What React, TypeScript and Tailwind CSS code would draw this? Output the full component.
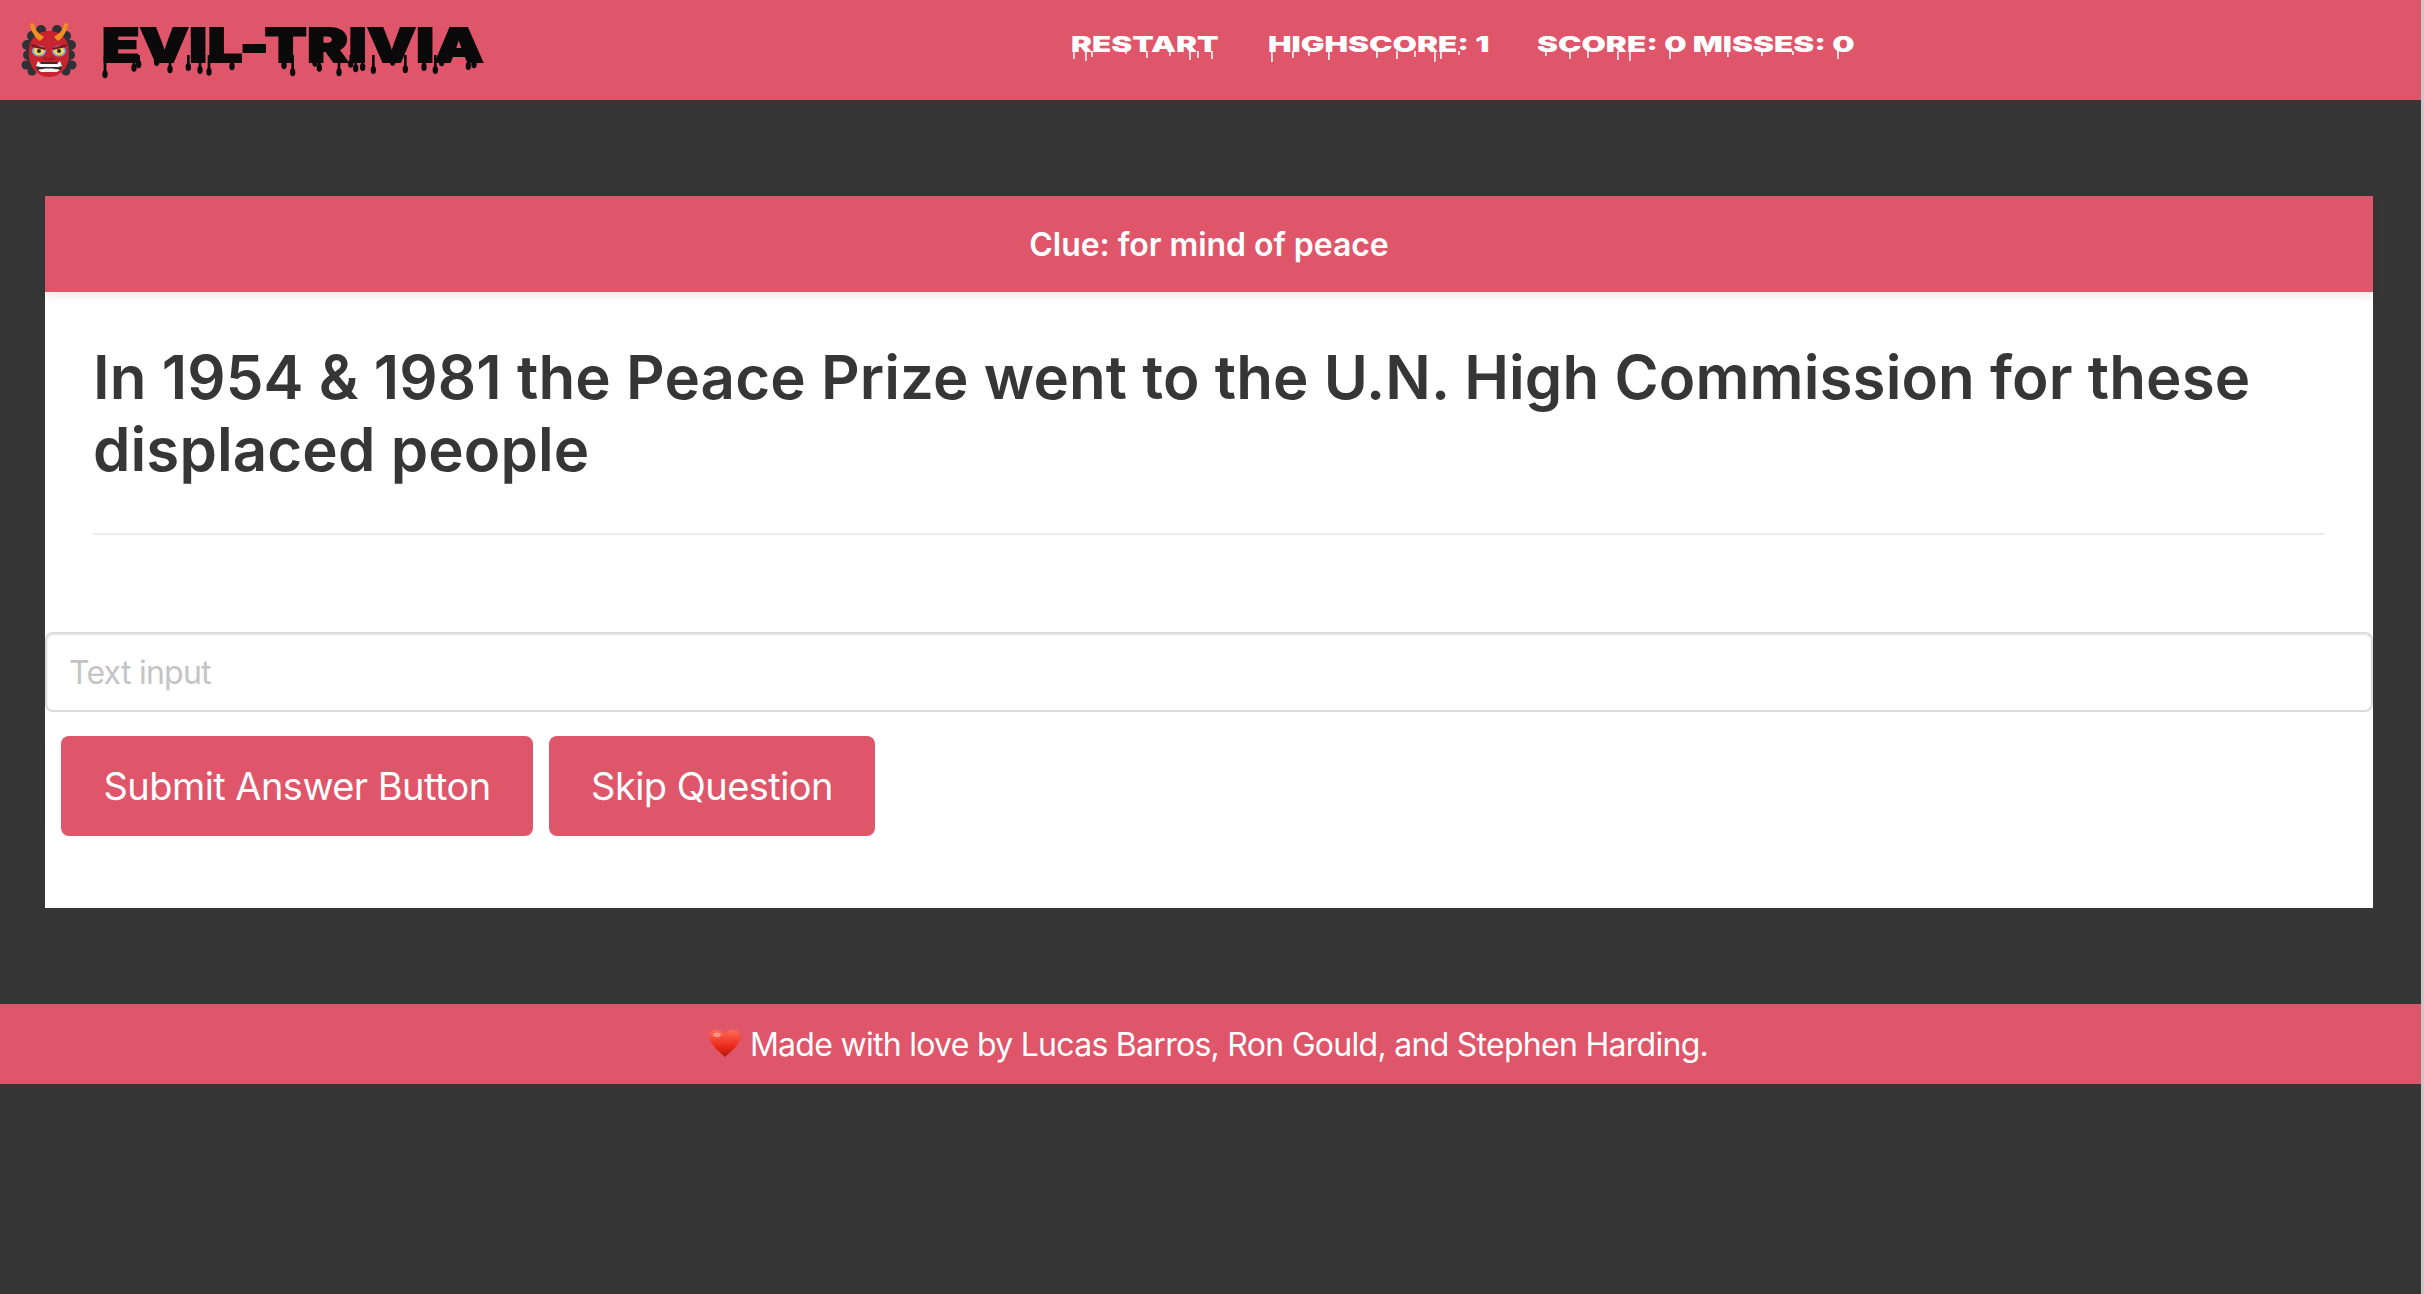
import React from "react";

const LOGO_DRIPS: [number, number][] = [
  [315, 232], [402, 212], [416, 202], [470, 195], [510, 217], [565, 210], [600, 219], [627, 224],
  [696, 208], [852, 205], [878, 226], [945, 197], [958, 212], [1017, 226], [1052, 200], [1067, 214],
  [1088, 210], [1120, 219], [1178, 194], [1216, 217], [1272, 210], [1306, 219], [1325, 196], [1405, 207], [1422, 202],
];

function LogoDrips() {
  return (
    <svg className="absolute left-[-102px] top-[-17px] w-[520px] h-[100px] pointer-events-none" viewBox="0 0 1560 300">
      {LOGO_DRIPS.map(([x, y]) => (
        <g key={x} fill="#0a0a0a">
          <rect x={x - 4} y={165} width={8} height={y - 170} />
          <ellipse cx={x} cy={y - 9} rx={8} ry={12} />
        </g>
      ))}
    </svg>
  );
}

function NavDrips({ xs, w }: { xs: [number, number][]; w: number }) {
  return (
    <svg className="absolute left-0 top-[21px] h-[24px] pointer-events-none" style={{ width: w }} viewBox={`0 0 ${w} 24`}>
      {xs.map(([x, l]) => (
        <rect key={x} x={x} y={0} width={1.8} height={l} fill="#ffffff" fillOpacity={0.85} />
      ))}
    </svg>
  );
}

function Oni() {
  return (
    <svg width="56" height="54" viewBox="0 0 56 54" className="shrink-0">
      <g fill="#2f3136">
        <circle cx="20" cy="7" r="5" /><circle cx="36" cy="7" r="5" />
        <circle cx="11" cy="13" r="5" /><circle cx="45" cy="13" r="5" />
        <circle cx="6" cy="22" r="5" /><circle cx="50" cy="22" r="5" />
        <circle cx="7" cy="32" r="5" /><circle cx="49" cy="32" r="5" />
        <circle cx="5" cy="42" r="4.5" /><circle cx="51" cy="42" r="4.5" />
        <circle cx="11" cy="48" r="4.5" /><circle cx="45" cy="48" r="4.5" />
        <rect x="6" y="8" width="44" height="42" rx="16" />
      </g>
      <path d="M8 30 C7 15 18 8 28 8 C38 8 49 15 48 30 C49 43 40 54 28 54 C16 54 7 43 8 30Z" fill="#c8242f" />
      <path d="M19 18 C14 15 10 8 9 1 C10 0 12 0 13 1 C14 7 18 11 23 14Z" fill="#f19020" />
      <path d="M37 18 C42 15 46 8 47 1 C46 0 44 0 43 1 C42 7 38 11 33 14Z" fill="#f19020" />
      <ellipse cx="18" cy="28" rx="7" ry="5.5" fill="#6fa8dc" />
      <ellipse cx="38" cy="28" rx="7" ry="5.5" fill="#6fa8dc" />
      <ellipse cx="18" cy="28" rx="5.4" ry="4" fill="#f3d25a" />
      <ellipse cx="38" cy="28" rx="5.4" ry="4" fill="#f3d25a" />
      <circle cx="18" cy="28" r="2" fill="#26282c" />
      <circle cx="38" cy="28" r="2" fill="#26282c" />
      <path d="M10 21 L25 25 L24 27 L11 24Z" fill="#7d1620" />
      <path d="M46 21 L31 25 L32 27 L45 24Z" fill="#7d1620" />
      <path d="M24 33 C26 36 30 36 32 33 L34 37 L22 37Z" fill="#a81c28" />
      <path d="M15 41 C20 38 36 38 41 41 L40 47 C35 49 21 49 16 47Z" fill="#3a2a2e" />
      <path d="M15 43 L17 38 L20 41 L36 41 L39 38 L41 43 L37 44 L19 44Z" fill="#ffffff" />
      <path d="M17 47 C22 45 34 45 39 47 L36 49 L20 49Z" fill="#f4f4f4" />
    </svg>
  );
}

function Heart() {
  return (
    <svg width="34" height="29" viewBox="0 0 34 30" preserveAspectRatio="none" className="shrink-0 -mt-[2px]">
      <defs>
        <linearGradient id="hg" x1="0" y1="0" x2="0" y2="1">
          <stop offset="0" stopColor="#ff6a55" />
          <stop offset="0.6" stopColor="#ec2a1c" />
          <stop offset="1" stopColor="#b51308" />
        </linearGradient>
      </defs>
      <path d="M17 29 C10 22 1 15 1 8 C1 3 5 1 9 1 C13 1 16 3 17 6 C18 3 21 1 25 1 C29 1 33 3 33 8 C33 15 24 22 17 29Z" fill="url(#hg)" />
      <ellipse cx="9" cy="6" rx="4" ry="2.4" fill="#ffffff" fillOpacity="0.35" />
    </svg>
  );
}

const navCls =
  "relative inline-block origin-left scale-x-[1.43] font-['Inter',sans-serif] font-black text-[22px] leading-[28px] text-white whitespace-nowrap";

export default function App() {
  return (
    <div className="flex min-h-[1294px] w-full bg-[#363636] font-['Inter',sans-serif]">
      <div className="flex-1 min-w-0">
        <nav className="h-[100px] bg-[#df556a] flex items-center">
          <div className="flex items-center w-[1071px] pl-[21px] shrink-0">
            <Oni />
            <div className="relative ml-[25px] mb-[10px]">
              <span className="block origin-left scale-x-[1.3] font-['Inter',sans-serif] font-black text-[47px] leading-[56px] tracking-[0.5px] text-[#0a0a0a] [-webkit-text-stroke:2px_#0a0a0a] whitespace-nowrap">
                EVIL-TRIVIA
              </span>
              <LogoDrips />
            </div>
          </div>
          <div className="flex items-center -mt-[12px]">
            <a className="w-[197px] relative">
              <span className={navCls}>RESTART</span>
              <NavDrips w={150} xs={[[2, 8], [14, 10], [20, 6], [54, 3], [75, 7], [98, 5], [118, 9], [126, 7], [140, 8]]} />
            </a>
            <a className="w-[269px] relative">
              <span className={navCls}>HIGHSCORE: 1</span>
              <NavDrips w={220} xs={[[3, 11], [24, 7], [40, 5], [60, 9], [108, 7], [128, 8], [146, 6], [166, 11], [172, 8], [190, 4]]} />
            </a>
            <a className="relative">
              <span className={navCls}>SCORE: 0 MISSES: 0</span>
              <NavDrips w={320} xs={[[8, 5], [32, 8], [50, 7], [80, 9], [92, 10], [132, 8], [168, 5], [190, 6], [224, 5], [255, 4], [300, 8]]} />
            </a>
          </div>
        </nav>

        <main className="pt-[96px] pl-[45px] pr-[48px]">
          <section className="bg-white">
            <header className="relative h-[96px] bg-[#df556a] flex items-center justify-center shadow-[0_4px_10px_rgba(10,10,10,0.1)]">
              <p className="text-white font-semibold text-[32px] leading-[48px] tracking-[-0.05px] mt-[2px]">Clue: for mind of peace</p>
            </header>
            <div className="px-[48px] pt-[49px]">
              <h1 className="text-[#363636] font-semibold text-[60px] leading-[72px] tracking-[0.1px]">
                In 1954 &amp; 1981 the Peace Prize went to the U.N. High Commission for these displaced people
              </h1>
              <hr className="mt-[48px] border-0 h-[2px] bg-[#ededed]" />
            </div>
            <div className="pt-[97px] pb-[72px]">
              <input
                readOnly
                placeholder="Text input"
                className="block w-full h-[80px] pl-[22px] pr-[24px] text-[32px] tracking-[-0.75px] text-[#363636] placeholder:text-[#c4c4c4] bg-white border-[2px] border-[#dbdbdb] rounded-[8px] outline-none shadow-[inset_0_1px_2px_rgba(10,10,10,0.1)]"
              />
              <div className="flex gap-[16px] pl-[16px] mt-[24px]">
                <button className="w-[472px] h-[100px] rounded-[8px] bg-[#df556a] text-white text-[38px] tracking-[-0.55px]">Submit Answer Button</button>
                <button className="w-[326px] h-[100px] rounded-[8px] bg-[#df556a] text-white text-[38px] tracking-[-0.55px]">Skip Question</button>
              </div>
            </div>
          </section>
        </main>

        <footer className="mt-[96px] h-[80px] bg-[#df556a] flex items-center justify-center gap-[8px] pr-[5px]">
          <Heart />
          <span className="text-white text-[32px] leading-[48px] tracking-[-0.72px] mt-[2px]">Made with love by Lucas Barros, Ron Gould, and Stephen Harding.</span>
        </footer>
      </div>
      <div className="w-[3px] shrink-0 bg-[#c9c9c9]" />
    </div>
  );
}
